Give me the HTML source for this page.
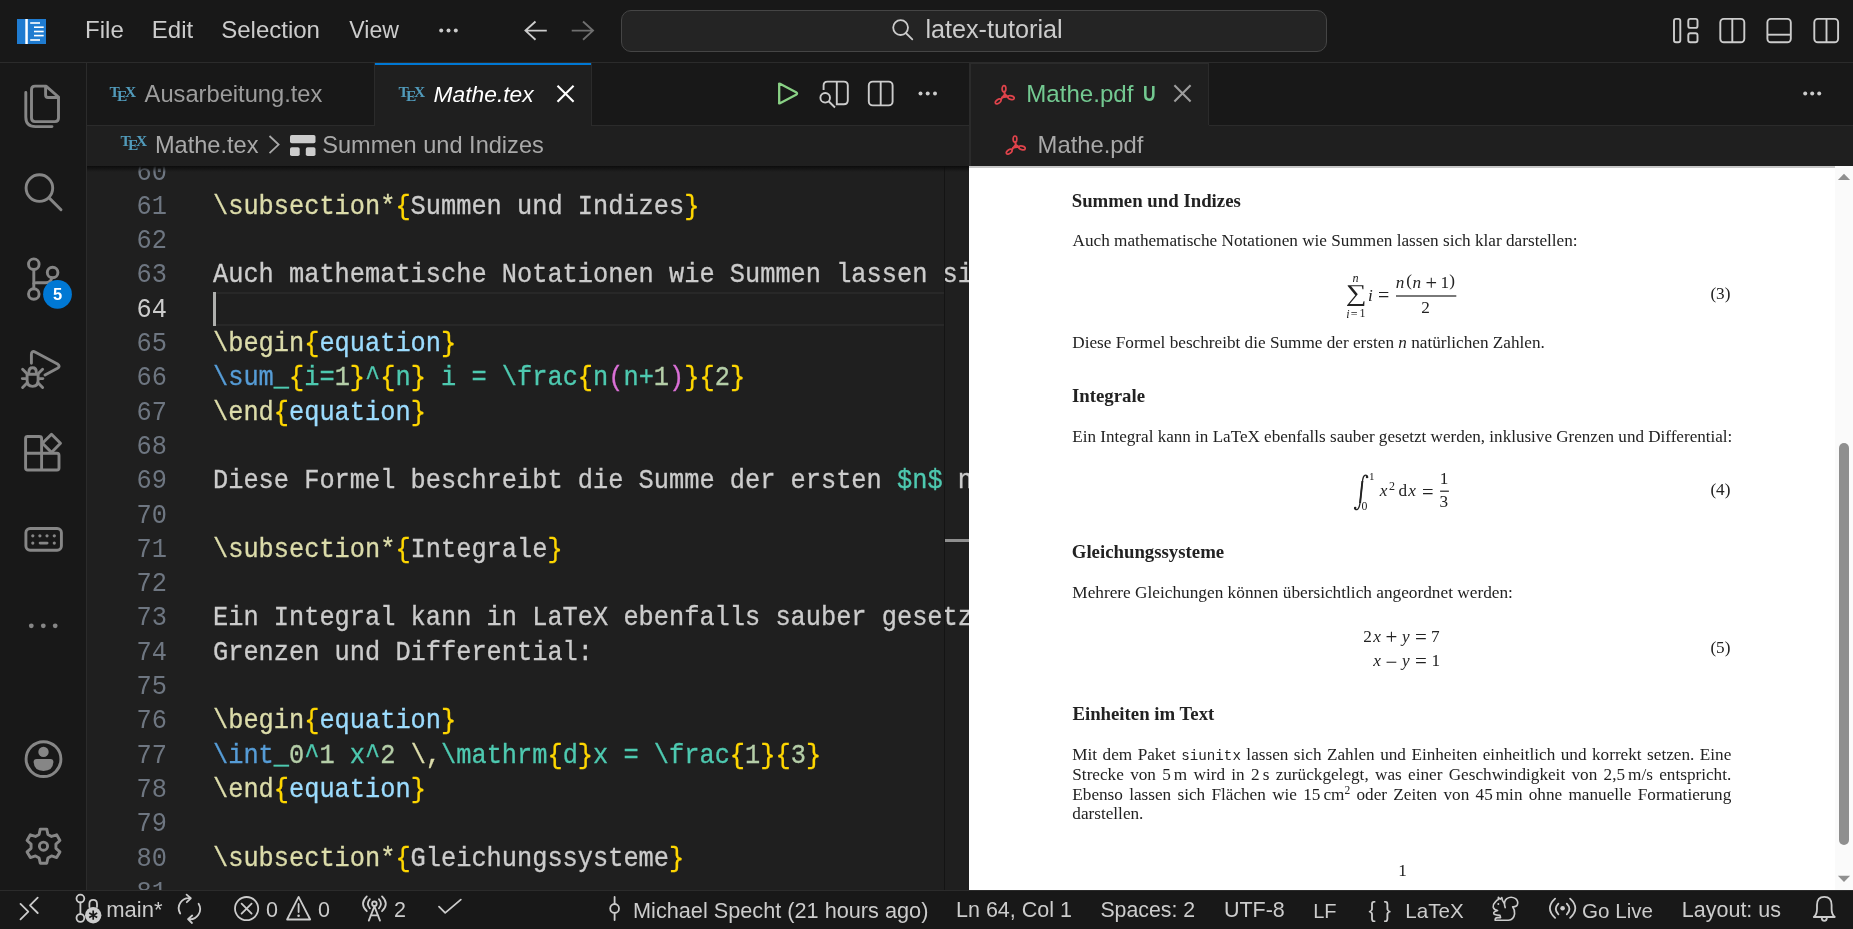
<!DOCTYPE html>
<html><head><meta charset="utf-8"><title>Mathe.tex - latex-tutorial</title>
<style>
*{margin:0;padding:0;box-sizing:border-box}
html,body{width:1853px;height:929px;overflow:hidden;background:#181818}
body{position:relative;font-family:"Liberation Sans",sans-serif;will-change:transform}
.r{position:absolute}
.t{position:absolute;white-space:pre;line-height:1}
.ov{position:absolute;left:0;top:0;pointer-events:none}
#editor{position:absolute;left:87px;top:166px;width:882px;height:724px;overflow:hidden;background:#1f1f1f}
#editor .ln{position:absolute;right:802px;transform:scaleY(1.08);transform-origin:0 19.4px;font-family:"Liberation Mono",monospace;font-size:25.345px;line-height:1;white-space:pre}
#editor .code{-webkit-text-stroke:0.3px currentColor;position:absolute;left:126px;transform:scaleY(1.08);transform-origin:0 19.4px;font-family:"Liberation Mono",monospace;font-size:25.345px;line-height:1;white-space:pre}
#pdf{position:absolute;left:969px;top:166px;width:884px;height:724px;overflow:hidden;background:#ffffff}
#pdfin{position:absolute;left:-969px;top:-166px;width:1853px;height:929px}
.th{display:inline-block;width:3px}
sup{font-size:11.5px;vertical-align:0;position:relative;top:-6px}
</style></head><body>
<div class="r" style="left:0px;top:0px;width:1853px;height:62px;background:#181818;"></div>
<div class="r" style="left:0px;top:62px;width:1853px;height:1px;background:#2b2b2b;"></div>
<div class="r" style="left:621px;top:10px;width:706px;height:42px;background:#242424;border:1px solid #454545;border-radius:10px;"></div>
<div class="r" style="left:0px;top:63px;width:86px;height:827px;background:#181818;"></div>
<div class="r" style="left:86px;top:63px;width:1px;height:827px;background:#2b2b2b;"></div>
<div class="r" style="left:87px;top:63px;width:882px;height:62px;background:#181818;"></div>
<div class="r" style="left:87px;top:125px;width:882px;height:1px;background:#2b2b2b;"></div>
<div class="r" style="left:374px;top:63px;width:1px;height:62px;background:#2b2b2b;"></div>
<div class="r" style="left:375px;top:63px;width:216px;height:63px;background:#1f1f1f;"></div>
<div class="r" style="left:375px;top:63px;width:216px;height:2px;background:#0078d4;"></div>
<div class="r" style="left:591px;top:63px;width:1px;height:62px;background:#2b2b2b;"></div>
<div class="r" style="left:87px;top:126px;width:882px;height:40px;background:#1f1f1f;"></div>
<div class="r" style="left:87px;top:166px;width:882px;height:724px;background:#1f1f1f;"></div>
<div class="r" style="left:969px;top:63px;width:884px;height:62px;background:#181818;"></div>
<div class="r" style="left:969px;top:63px;width:2px;height:103px;background:#2b2b2b;"></div>
<div class="r" style="left:971px;top:63px;width:238px;height:63px;background:#1f1f1f;"></div>
<div class="r" style="left:971px;top:63px;width:238px;height:1px;background:#2b2b2b;"></div>
<div class="r" style="left:1208px;top:63px;width:1px;height:62px;background:#2b2b2b;"></div>
<div class="r" style="left:1209px;top:125px;width:644px;height:1px;background:#2b2b2b;"></div>
<div class="r" style="left:971px;top:126px;width:882px;height:40px;background:#1f1f1f;"></div>
<div class="r" style="left:0px;top:890px;width:1853px;height:39px;background:#181818;"></div>
<div class="r" style="left:0px;top:890px;width:1853px;height:1px;background:#2b2b2b;"></div>
<div id="editor">
<div class="r" style="left:126px;top:126px;width:731px;height:34px;border-top:2px solid #282828;border-bottom:2px solid #282828"></div>
<div class="ln" style="top:-5.42px;color:#6e7681">60</div>
<div class="ln" style="top:28.88px;color:#6e7681">61</div>
<div class="code" style="top:28.88px"><span style="color:#dcdcaa">\subsection*</span><span style="color:#ffd700">{</span><span style="color:#cccccc">Summen und Indizes</span><span style="color:#ffd700">}</span></div>
<div class="ln" style="top:63.18px;color:#6e7681">62</div>
<div class="ln" style="top:97.48px;color:#6e7681">63</div>
<div class="code" style="top:97.48px"><span style="color:#cccccc">Auch mathematische Notationen wie Summen lassen si</span></div>
<div class="ln" style="top:131.78px;color:#cccccc">64</div>
<div class="ln" style="top:166.08px;color:#6e7681">65</div>
<div class="code" style="top:166.08px"><span style="color:#dcdcaa">\begin</span><span style="color:#ffd700">{</span><span style="color:#9cdcfe">equation</span><span style="color:#ffd700">}</span></div>
<div class="ln" style="top:200.38px;color:#6e7681">66</div>
<div class="code" style="top:200.38px"><span style="color:#569cd6">\sum</span><span style="color:#4ec9b0">_</span><span style="color:#ffd700">{</span><span style="color:#4ec9b0">i=</span><span style="color:#b5cea8">1</span><span style="color:#ffd700">}</span><span style="color:#4ec9b0">^</span><span style="color:#ffd700">{</span><span style="color:#4ec9b0">n</span><span style="color:#ffd700">}</span><span style="color:#4ec9b0"> i = \frac</span><span style="color:#ffd700">{</span><span style="color:#4ec9b0">n</span><span style="color:#da70d6">(</span><span style="color:#4ec9b0">n+</span><span style="color:#b5cea8">1</span><span style="color:#da70d6">)</span><span style="color:#ffd700">}</span><span style="color:#ffd700">{</span><span style="color:#b5cea8">2</span><span style="color:#ffd700">}</span></div>
<div class="ln" style="top:234.68px;color:#6e7681">67</div>
<div class="code" style="top:234.68px"><span style="color:#dcdcaa">\end</span><span style="color:#ffd700">{</span><span style="color:#9cdcfe">equation</span><span style="color:#ffd700">}</span></div>
<div class="ln" style="top:268.98px;color:#6e7681">68</div>
<div class="ln" style="top:303.28px;color:#6e7681">69</div>
<div class="code" style="top:303.28px"><span style="color:#cccccc">Diese Formel beschreibt die Summe der ersten </span><span style="color:#4ec9b0">$n$</span><span style="color:#cccccc"> n</span></div>
<div class="ln" style="top:337.58px;color:#6e7681">70</div>
<div class="ln" style="top:371.88px;color:#6e7681">71</div>
<div class="code" style="top:371.88px"><span style="color:#dcdcaa">\subsection*</span><span style="color:#ffd700">{</span><span style="color:#cccccc">Integrale</span><span style="color:#ffd700">}</span></div>
<div class="ln" style="top:406.18px;color:#6e7681">72</div>
<div class="ln" style="top:440.48px;color:#6e7681">73</div>
<div class="code" style="top:440.48px"><span style="color:#cccccc">Ein Integral kann in LaTeX ebenfalls sauber gesetz</span></div>
<div class="ln" style="top:474.78px;color:#6e7681">74</div>
<div class="code" style="top:474.78px"><span style="color:#cccccc">Grenzen und Differential:</span></div>
<div class="ln" style="top:509.08px;color:#6e7681">75</div>
<div class="ln" style="top:543.38px;color:#6e7681">76</div>
<div class="code" style="top:543.38px"><span style="color:#dcdcaa">\begin</span><span style="color:#ffd700">{</span><span style="color:#9cdcfe">equation</span><span style="color:#ffd700">}</span></div>
<div class="ln" style="top:577.68px;color:#6e7681">77</div>
<div class="code" style="top:577.68px"><span style="color:#569cd6">\int</span><span style="color:#4ec9b0">_</span><span style="color:#b5cea8">0</span><span style="color:#4ec9b0">^</span><span style="color:#b5cea8">1</span><span style="color:#4ec9b0"> x^</span><span style="color:#b5cea8">2</span><span style="color:#cccccc"> </span><span style="color:#dcdcaa">\,</span><span style="color:#4ec9b0">\mathrm</span><span style="color:#ffd700">{</span><span style="color:#4ec9b0">d</span><span style="color:#ffd700">}</span><span style="color:#4ec9b0">x = \frac</span><span style="color:#ffd700">{</span><span style="color:#b5cea8">1</span><span style="color:#ffd700">}</span><span style="color:#ffd700">{</span><span style="color:#b5cea8">3</span><span style="color:#ffd700">}</span></div>
<div class="ln" style="top:611.98px;color:#6e7681">78</div>
<div class="code" style="top:611.98px"><span style="color:#dcdcaa">\end</span><span style="color:#ffd700">{</span><span style="color:#9cdcfe">equation</span><span style="color:#ffd700">}</span></div>
<div class="ln" style="top:646.28px;color:#6e7681">79</div>
<div class="ln" style="top:680.58px;color:#6e7681">80</div>
<div class="code" style="top:680.58px"><span style="color:#dcdcaa">\subsection*</span><span style="color:#ffd700">{</span><span style="color:#cccccc">Gleichungssysteme</span><span style="color:#ffd700">}</span></div>
<div class="ln" style="top:714.88px;color:#6e7681">81</div>
<div class="r" style="left:126px;top:126px;width:3px;height:34px;background:#aeafad"></div>
<div class="r" style="left:857px;top:0;width:1px;height:724px;background:#141414"></div>
<div class="r" style="left:858px;top:373px;width:24px;height:3px;background:#8f8f8f"></div>
<div class="r" style="left:0;top:0;width:882px;height:6px;background:linear-gradient(#0c0c0c,rgba(0,0,0,0))"></div>
</div>
<div id="pdf"><div id="pdfin">
<div class="t" style="left:1071.70px;top:191.76px;font-size:18.8px;font-family:'Liberation Serif', serif;color:#222222;font-weight:bold;">Summen und Indizes</div>
<div class="t" style="left:1072.60px;top:232.30px;font-size:17.2px;font-family:'Liberation Serif', serif;color:#222222;">Auch mathematische Notationen wie Summen lassen sich klar darstellen:</div>
<div class="t" style="left:1072.30px;top:334.40px;font-size:17.2px;font-family:'Liberation Serif', serif;color:#222222;">Diese Formel beschreibt die Summe der ersten <i>n</i> natürlichen Zahlen.</div>
<div class="t" style="left:1072.00px;top:387.26px;font-size:18.8px;font-family:'Liberation Serif', serif;color:#222222;font-weight:bold;">Integrale</div>
<div class="t" style="left:1072.30px;top:428.20px;font-size:17.08px;font-family:'Liberation Serif', serif;color:#222222;">Ein Integral kann in LaTeX ebenfalls sauber gesetzt werden, inklusive Grenzen und Differential:</div>
<div class="t" style="left:1071.80px;top:543.26px;font-size:18.8px;font-family:'Liberation Serif', serif;color:#222222;font-weight:bold;">Gleichungssysteme</div>
<div class="t" style="left:1072.30px;top:583.73px;font-size:17.28px;font-family:'Liberation Serif', serif;color:#222222;">Mehrere Gleichungen können übersichtlich angeordnet werden:</div>
<div class="t" style="left:1072.40px;top:705.06px;font-size:18.8px;font-family:'Liberation Serif', serif;color:#222222;font-weight:bold;">Einheiten im Text</div>
<div class="t" style="left:1072.30px;top:745.90px;font-size:17.2px;font-family:'Liberation Serif', serif;color:#222222;width:659px;white-space:normal;text-align:justify;text-align-last:justify;">Mit dem Paket <span style="font-family:'Liberation Mono';font-size:14.2px">siunitx</span> lassen sich Zahlen und Einheiten einheitlich und korrekt setzen. Eine</div>
<div class="t" style="left:1072.30px;top:766.10px;font-size:17.2px;font-family:'Liberation Serif', serif;color:#222222;width:659px;white-space:normal;text-align:justify;text-align-last:justify;">Strecke von 5<span class="th"></span>m wird in 2<span class="th"></span>s zurückgelegt, was einer Geschwindigkeit von 2,5<span class="th"></span>m/s entspricht.</div>
<div class="t" style="left:1072.30px;top:785.90px;font-size:17.2px;font-family:'Liberation Serif', serif;color:#222222;width:659px;white-space:normal;text-align:justify;text-align-last:justify;">Ebenso lassen sich Flächen wie 15<span class="th"></span>cm<sup>2</sup> oder Zeiten von 45<span class="th"></span>min ohne manuelle Formatierung</div>
<div class="t" style="left:1072.30px;top:805.20px;font-size:17.2px;font-family:'Liberation Serif', serif;color:#222222;width:659px;white-space:normal;">darstellen.</div>
<div class="t" style="left:1710.40px;top:285.40px;font-size:17.2px;font-family:'Liberation Serif', serif;color:#222222;">(3)</div>
<div class="t" style="left:1710.40px;top:481.20px;font-size:17.2px;font-family:'Liberation Serif', serif;color:#222222;">(4)</div>
<div class="t" style="left:1710.40px;top:639.20px;font-size:17.2px;font-family:'Liberation Serif', serif;color:#222222;">(5)</div>
<div class="t" style="left:1398.20px;top:861.50px;font-size:17.2px;font-family:'Liberation Serif', serif;color:#222222;">1</div><svg class="ov" width="1853" height="929" style="font-family:'Liberation Serif'" fill="#222222"><text x="1352.50" y="282.40" font-style="italic" font-size="12.2">n</text><text x="1346.25" y="317.60" font-style="italic" font-size="12">i</text><text x="1350.67" y="318.30" font-style="normal" font-size="12">=</text><text x="1359.40" y="317.40" font-style="normal" font-size="12">1</text><text x="1367.90" y="300.73" font-style="italic" font-size="17.2">i</text><text x="1378.00" y="302.32" font-style="normal" font-size="20">=</text><text x="1395.78" y="287.70" font-style="italic" font-size="17.2">n</text><text x="1406.15" y="286.07" font-style="normal" font-size="17.2">(</text><text x="1412.38" y="287.70" font-style="italic" font-size="17.2">n</text><text x="1425.40" y="289.60" font-style="normal" font-size="20.5">+</text><text x="1440.60" y="287.70" font-style="normal" font-size="17.2">1</text><text x="1449.30" y="286.07" font-style="normal" font-size="17.2">)</text><text x="1421.15" y="312.80" font-style="normal" font-size="17.2">2</text><text x="1368.90" y="479.68" font-style="normal" font-size="11">1</text><text x="1361.50" y="510.07" font-style="normal" font-size="11.8">0</text><text x="1379.65" y="496.40" font-style="italic" font-size="17.2">x</text><text x="1389.00" y="490.00" font-style="normal" font-size="12">2</text><text x="1398.58" y="496.27" font-style="normal" font-size="17.2">d</text><text x="1408.35" y="496.40" font-style="italic" font-size="17.2">x</text><text x="1422.10" y="498.65" font-style="normal" font-size="20.5">=</text><text x="1439.80" y="483.50" font-style="normal" font-size="17.2">1</text><text x="1439.62" y="507.27" font-style="normal" font-size="17.2">3</text><text x="1363.25" y="642.30" font-style="normal" font-size="17.2">2</text><text x="1373.25" y="642.30" font-style="italic" font-size="17.2">x</text><text x="1385.50" y="644.42" font-style="normal" font-size="21">+</text><text x="1401.88" y="642.30" font-style="italic" font-size="17.2">y</text><text x="1415.00" y="644.17" font-style="normal" font-size="21">=</text><text x="1430.88" y="642.30" font-style="normal" font-size="17.2">7</text><text x="1373.25" y="666.10" font-style="italic" font-size="17.2">x</text><text x="1385.50" y="668.70" font-style="normal" font-size="21">−</text><text x="1401.88" y="666.10" font-style="italic" font-size="17.2">y</text><text x="1415.00" y="668.38" font-style="normal" font-size="21">=</text><text x="1431.50" y="666.10" font-style="normal" font-size="17.2">1</text><text transform="translate(1345.63,301.18) scale(1.221,1)" font-size="23.9">∑</text><path d="M1367.6 477.2 C1367.4 474.6 1364.6 474.2 1363.4 477 C1362.7 478.6 1362.4 481 1362.1 484 L1360.2 501.5 C1359.8 505.5 1359.2 508 1357.6 509.2 C1356.4 510 1354.9 509.7 1354.6 508.2" fill="none" stroke="#222222" stroke-width="1.35" stroke-linecap="round"/><path d="M1362.4 481 L1360.1 503" stroke="#222222" stroke-width="1.9"/><circle cx="1367" cy="476.9" r="1.25" fill="#222222"/><circle cx="1355.2" cy="508" r="1.25" fill="#222222"/><rect x="1396" y="295.4" width="60.3" height="1.2" fill="#222222"/><rect x="1440.1" y="490.6" width="8.8" height="1.2" fill="#222222"/></svg>
</div>
<div class="r" style="left:0;top:0;width:884px;height:2px;background:#c8c8c8"></div>
<div class="r" style="left:866px;top:0;width:18px;height:724px;background:#fafafa"></div>
<div class="r" style="left:869.8px;top:277px;width:10px;height:402px;border-radius:5px;background:#8f8f8f"></div>
</div>
<div class="t" style="left:85.10px;top:17.68px;font-size:24px;font-family:'Liberation Sans', sans-serif;color:#cccccc;">File</div>
<div class="t" style="left:151.80px;top:17.68px;font-size:24px;font-family:'Liberation Sans', sans-serif;color:#cccccc;">Edit</div>
<div class="t" style="left:221.20px;top:17.68px;font-size:24px;font-family:'Liberation Sans', sans-serif;color:#cccccc;">Selection</div>
<div class="t" style="left:349.30px;top:19.04px;font-size:23.1px;font-family:'Liberation Sans', sans-serif;color:#cccccc;">View</div>
<div class="t" style="left:925.40px;top:16.66px;font-size:25.2px;font-family:'Liberation Sans', sans-serif;color:#cccccc;">latex-tutorial</div>
<div class="t" style="left:144.60px;top:82.93px;font-size:23.7px;font-family:'Liberation Sans', sans-serif;color:#9d9d9d;">Ausarbeitung.tex</div>
<div class="t" style="left:433.60px;top:82.60px;font-size:22.8px;font-family:'Liberation Sans', sans-serif;color:#ffffff;font-style:italic;">Mathe.tex</div>
<div class="t" style="left:1026.30px;top:82.49px;font-size:24.1px;font-family:'Liberation Sans', sans-serif;color:#73c991;">Mathe.pdf</div>
<div class="t" style="left:1142.80px;top:83.13px;font-size:22.4px;font-family:'Liberation Sans', sans-serif;color:#73c991;font-weight:bold;transform:scaleX(0.78);transform-origin:0 0;">U</div>
<div class="t" style="left:154.90px;top:133.52px;font-size:23.6px;font-family:'Liberation Sans', sans-serif;color:#a9a9a9;">Mathe.tex</div>
<div class="t" style="left:322.20px;top:133.52px;font-size:23.6px;font-family:'Liberation Sans', sans-serif;color:#a9a9a9;">Summen und Indizes</div>
<div class="t" style="left:1037.60px;top:133.35px;font-size:23.8px;font-family:'Liberation Sans', sans-serif;color:#a9a9a9;">Mathe.pdf</div>
<div class="t" style="left:106.30px;top:899.37px;font-size:22px;font-family:'Liberation Sans', sans-serif;color:#cccccc;">main*</div>
<div class="t" style="left:266.00px;top:899.90px;font-size:21.5px;font-family:'Liberation Sans', sans-serif;color:#cccccc;">0</div>
<div class="t" style="left:318.00px;top:899.90px;font-size:21.5px;font-family:'Liberation Sans', sans-serif;color:#cccccc;">0</div>
<div class="t" style="left:394.10px;top:899.90px;font-size:21.5px;font-family:'Liberation Sans', sans-serif;color:#cccccc;">2</div>
<div class="t" style="left:633.00px;top:899.73px;font-size:21.7px;font-family:'Liberation Sans', sans-serif;color:#cccccc;">Michael Specht (21 hours ago)</div>
<div class="t" style="left:956.00px;top:899.90px;font-size:21.5px;font-family:'Liberation Sans', sans-serif;color:#cccccc;">Ln 64, Col 1</div>
<div class="t" style="left:1100.40px;top:900.07px;font-size:21.3px;font-family:'Liberation Sans', sans-serif;color:#cccccc;">Spaces: 2</div>
<div class="t" style="left:1223.90px;top:899.90px;font-size:21.5px;font-family:'Liberation Sans', sans-serif;color:#cccccc;">UTF-8</div>
<div class="t" style="left:1313.20px;top:901.17px;font-size:20px;font-family:'Liberation Sans', sans-serif;color:#cccccc;">LF</div>
<div class="t" style="left:1368.50px;top:899.90px;font-size:21.5px;font-family:'Liberation Sans', sans-serif;color:#cccccc;letter-spacing:1px;">{ }</div>
<div class="t" style="left:1405.30px;top:900.66px;font-size:20.6px;font-family:'Liberation Sans', sans-serif;color:#cccccc;">LaTeX</div>
<div class="t" style="left:1582.00px;top:900.66px;font-size:20.6px;font-family:'Liberation Sans', sans-serif;color:#cccccc;">Go Live</div>
<div class="t" style="left:1681.80px;top:899.90px;font-size:21.5px;font-family:'Liberation Sans', sans-serif;color:#cccccc;">Layout: us</div>
<svg class="ov" width="1853" height="929" viewBox="0 0 1853 929"><rect x="17" y="19" width="29" height="25" fill="#1f7bd0"/><rect x="25.3" y="19" width="2.5" height="25" fill="#ffffff"/><rect x="30.2" y="22.2" width="9.8" height="1.6" fill="#ffffff"/><rect x="34" y="26.4" width="9.700000000000003" height="1.6" fill="#ffffff"/><rect x="34" y="30.7" width="9.700000000000003" height="1.6" fill="#ffffff"/><rect x="34" y="34.800000000000004" width="9.700000000000003" height="1.6" fill="#ffffff"/><rect x="30.2" y="39.2" width="9.8" height="1.6" fill="#ffffff"/><circle cx="441.2" cy="30.6" r="2" fill="#cccccc"/><circle cx="448.5" cy="30.6" r="2" fill="#cccccc"/><circle cx="455.8" cy="30.6" r="2" fill="#cccccc"/><path d="M546.8 30.6 H526 M535.5 21.5 L525.5 30.6 L535.5 39.7" fill="none" stroke="#cccccc" stroke-width="1.9"/><path d="M571.7 30.6 H592.5 M583 21.5 L593 30.6 L583 39.7" fill="none" stroke="#6f6f6f" stroke-width="1.9"/><circle cx="900.6" cy="27.6" r="7.4" fill="none" stroke="#cccccc" stroke-width="1.8"/><path d="M905.8 33 L912.3 39.4" stroke="#cccccc" stroke-width="1.8" stroke-linecap="round"/><g fill="none" stroke="#cccccc" stroke-width="1.9"><rect x="1674" y="18.9" width="6.3" height="23.4" rx="2"/><rect x="1688.3" y="18.9" width="9.2" height="9" rx="2"/><rect x="1688.3" y="33.3" width="9.2" height="9" rx="2"/><rect x="1720.3" y="18.9" width="24" height="23.4" rx="3.5"/><path d="M1732.3 19 V42.3"/><rect x="1767.4" y="18.9" width="23.4" height="23.4" rx="3.5"/><path d="M1767.4 34.7 H1790.8"/><rect x="1814.3" y="18.9" width="23.8" height="23.4" rx="3.5"/><path d="M1826.5 19 V42.3"/></g><g fill="none" stroke="#868686" stroke-width="2.9" stroke-linecap="round" stroke-linejoin="round"><path d="M46 86.1 H35 Q31.5 86.1 31.5 89.6 V118 Q31.5 121.6 35 121.6 H55 Q58.5 121.6 58.5 118 V97 L46 86.1 Z"/><path d="M45.6 86.4 V95 Q45.6 97.5 48 97.5 H58.2"/><path d="M25.8 92.5 V117 Q25.8 126.6 35.5 126.6 H52"/><circle cx="39.4" cy="188.1" r="13.3"/><path d="M49.6 198.4 L61 209.7"/><circle cx="33.8" cy="264.2" r="5.3"/><circle cx="33.8" cy="294" r="5.3"/><circle cx="52.6" cy="272.5" r="5.3"/><path d="M33.8 269.5 V288.7"/><path d="M33.8 283.6 Q34.3 282.8 37 282.8 H46 Q50.8 282.8 51.8 277.8"/><path d="M31.4 363.2 V354.5 Q31.4 350 35.5 352.2 L57.5 364 Q60.8 366.3 57.5 368.2 L45 375"/><path d="M27.1 374.3 V380.3 Q27.1 386.4 32.6 386.4 Q38.1 386.4 38.1 380.3 V374.3 Z"/><path d="M28.9 372.3 Q28.9 367.8 32.6 367.8 Q36.3 367.8 36.3 372.3"/><path d="M22.6 369.3 L26.6 373.3 M42.6 369.3 L38.6 373.3 M22.3 378.6 H26.5 M42.9 378.6 H38.7 M22.6 387.5 L26.8 383.3 M42.6 387.5 L38.4 383.3"/><path d="M25.6 453 V438.5 Q25.6 436.5 27.6 436.5 H39.2 Q41.6 436.5 41.6 438.5 V469.5 M25.6 453 V468 Q25.6 470 27.6 470 H57 Q59 470 59 468 V455.4 Q59 453.3 57 453.3 H25.6"/><path d="M51.5 434.2 L60.5 443.3 L51.5 452.4 L42.4 443.3 Z"/></g><rect x="25.9" y="528.5" width="35.5" height="21.8" rx="4.2" fill="none" stroke="#868686" stroke-width="2.9"/><circle cx="32.8" cy="535.8" r="1.6" fill="#868686"/><circle cx="39.9" cy="535.8" r="1.6" fill="#868686"/><circle cx="47" cy="535.8" r="1.6" fill="#868686"/><circle cx="54.3" cy="535.8" r="1.6" fill="#868686"/><circle cx="32.8" cy="543.1" r="1.6" fill="#868686"/><circle cx="54.3" cy="543.1" r="1.6" fill="#868686"/><path d="M40 543.1 H47.2" stroke="#868686" stroke-width="2.6" stroke-linecap="round"/><circle cx="31.3" cy="625.8" r="2.4" fill="#868686"/><circle cx="43.3" cy="625.8" r="2.4" fill="#868686"/><circle cx="55.2" cy="625.8" r="2.4" fill="#868686"/><circle cx="43.5" cy="759.1" r="17.4" fill="none" stroke="#868686" stroke-width="2.9"/><circle cx="43.5" cy="751.9" r="5.2" fill="#868686"/><path d="M36.6 758.9 H50.5 Q53.4 758.9 53.4 761.8 Q53 770.9 43.5 770.9 Q34 770.9 33.6 761.8 Q33.6 758.9 36.6 758.9 Z" fill="#868686"/><path d="M39.11 834.39 L40.24 829.11 L46.76 829.11 L47.89 834.39 L51.53 836.49 L56.67 834.83 L59.93 840.48 L55.92 844.10 L55.92 848.30 L59.93 851.92 L56.67 857.57 L51.53 855.91 L47.89 858.01 L46.76 863.29 L40.24 863.29 L39.11 858.01 L35.47 855.91 L30.33 857.57 L27.07 851.92 L31.08 848.30 L31.08 844.10 L27.07 840.48 L30.33 834.83 L35.47 836.49 Z" fill="none" stroke="#868686" stroke-width="2.9" stroke-linejoin="round"/><circle cx="43.5" cy="846.2" r="4.1" fill="none" stroke="#868686" stroke-width="2.9"/><circle cx="57.5" cy="294.3" r="14.4" fill="#0078d4"/><text x="57.5" y="300.2" text-anchor="middle" font-family="Liberation Sans" font-weight="bold" font-size="16.5" fill="#ffffff">5</text><g fill="#519aba" font-family="Liberation Serif" font-weight="bold" font-size="15.5"><text x="109.5" y="97.4">T</text><text x="116.89999999999999" y="101.3">E</text><text x="125.0" y="97.4">X</text></g><g fill="#519aba" font-family="Liberation Serif" font-weight="bold" font-size="15.5"><text x="398.5" y="97.4">T</text><text x="405.90000000000003" y="101.3">E</text><text x="414.0" y="97.4">X</text></g><g fill="#519aba" font-family="Liberation Serif" font-weight="bold" font-size="15.5"><text x="120.5" y="145.9">T</text><text x="127.89999999999999" y="149.8">E</text><text x="136.0" y="145.9">X</text></g><path d="M557.5 85.8 L573.6 101.8 M573.6 85.8 L557.5 101.8" stroke="#ffffff" stroke-width="2.1"/><path d="M1174.4 85.3 L1190.6 101.4 M1190.6 85.3 L1174.4 101.4" stroke="#9d9d9d" stroke-width="2.1"/><g transform="translate(995,85.2)" fill="none" stroke="#df434b" stroke-linecap="round" stroke-linejoin="round"><ellipse cx="9" cy="3.6" rx="1.9" ry="3.1" stroke-width="1.7"/><ellipse cx="16" cy="12.4" rx="3.3" ry="1.8" transform="rotate(14 16 12.4)" stroke-width="1.7"/><ellipse cx="3.2" cy="16.2" rx="3.3" ry="1.8" transform="rotate(-38 3.2 16.2)" stroke-width="1.7"/><path d="M9.3 6.5 L9.8 9.2 L6.3 13.7 M9.8 9.2 L12.8 11.6 M9.8 9.2 Q8.5 11.6 7 12.3 Q10 11.2 12.8 11.6" stroke-width="2"/></g><g transform="translate(1006,135.5)" fill="none" stroke="#df434b" stroke-linecap="round" stroke-linejoin="round"><ellipse cx="9" cy="3.6" rx="1.9" ry="3.1" stroke-width="1.7"/><ellipse cx="16" cy="12.4" rx="3.3" ry="1.8" transform="rotate(14 16 12.4)" stroke-width="1.7"/><ellipse cx="3.2" cy="16.2" rx="3.3" ry="1.8" transform="rotate(-38 3.2 16.2)" stroke-width="1.7"/><path d="M9.3 6.5 L9.8 9.2 L6.3 13.7 M9.8 9.2 L12.8 11.6 M9.8 9.2 Q8.5 11.6 7 12.3 Q10 11.2 12.8 11.6" stroke-width="2"/></g><path d="M779.2 84.5 Q778.6 83.2 780 83.8 L796.5 92.6 Q797.6 93.5 796.5 94.4 L780 103.2 Q778.6 103.8 779.2 102.5 Z" fill="none" stroke="#89d185" stroke-width="2.3" stroke-linejoin="round"/><g fill="none" stroke="#cccccc" stroke-width="1.9"><path d="M823.6 90 V85.5 Q823.6 81.6 827.5 81.6 H843.8 Q847.8 81.6 847.8 85.5 V100.2 Q847.8 104.2 843.8 104.2 H836.8 V81.6"/><circle cx="825.2" cy="97.8" r="4.8"/><path d="M828.6 101.3 L835 107.5"/></g><g fill="none" stroke="#cccccc" stroke-width="1.9"><rect x="868.8" y="81.6" width="23.8" height="23.8" rx="4"/><path d="M880.7 81.6 V105.4"/></g><circle cx="920.5" cy="93.5" r="2" fill="#cccccc"/><circle cx="927.7" cy="93.5" r="2" fill="#cccccc"/><circle cx="935" cy="93.5" r="2" fill="#cccccc"/><circle cx="1805.2" cy="93.4" r="2" fill="#cccccc"/><circle cx="1812.2" cy="93.4" r="2" fill="#cccccc"/><circle cx="1819.2" cy="93.4" r="2" fill="#cccccc"/><path d="M269.5 136 L278.6 144.6 L269.5 153.2" fill="none" stroke="#a9a9a9" stroke-width="1.8"/><rect x="290" y="135" width="25.5" height="8.3" rx="1.8" fill="#cccccc"/><rect x="290" y="147.3" width="9.7" height="8.7" rx="1.8" fill="#cccccc"/><rect x="305.8" y="147.3" width="9.7" height="8.7" rx="1.8" fill="#cccccc"/><g fill="none" stroke="#cccccc" stroke-width="1.8" stroke-linecap="round" stroke-linejoin="round"><path d="M20.5 919.3 L28.3 911.6 L20.5 903.9 M37.7 897.6 L30 905.3 L37.7 913"/><circle cx="80.4" cy="898.6" r="3.9"/><circle cx="80.4" cy="918" r="3.9"/><path d="M80.4 902.5 V914.1"/><path d="M89.4 907 V903.8 Q89.4 899.9 93.2 899.9 Q97 899.9 97 903.8 V907"/><path d="M180.2 913.5 A10.2 10.2 0 0 1 190.5 898.2 M186.6 894.6 L190.8 898.3 L186.8 902.2 M198.6 903.8 A10.2 10.2 0 0 1 188.2 919.2 M192.2 915.5 L188 919.2 L192 923"/><circle cx="246.6" cy="908.6" r="11.6"/><path d="M241.6 903.6 L251.6 913.6 M251.6 903.6 L241.6 913.6"/><path d="M298.6 896.9 L310.2 919.5 H287.1 Z"/><path d="M298.6 904 V912"/><circle cx="374.4" cy="903.8" r="2.3"/><path d="M374.4 906.3 L368.8 920.6 M374.4 906.3 L380 920.6 M370.6 915.4 H378.2 M366.8 896.4 Q359.2 903.8 366.8 911.2 M369.9 899.2 Q365.9 903.8 369.9 908.4 M382 896.4 Q389.6 903.8 382 911.2 M378.9 899.2 Q382.9 903.8 378.9 908.4"/><path d="M439 906.7 L445.2 912.9 L460.8 899.6"/><circle cx="614.6" cy="908.4" r="4.4"/><path d="M614.6 897 V904 M614.6 912.8 V920"/><path d="M1813.8 917 Q1817 914.6 1817 909 V905 Q1817 896.8 1824.3 896.8 Q1831.6 896.8 1831.6 905 V909 Q1831.6 914.6 1834.8 917 Z M1821.7 917.5 Q1821.7 920.8 1824.3 920.8 Q1826.9 920.8 1826.9 917.5"/><path d="M1555.1 898.6 Q1544.7 908.2 1555.1 917.8 M1558.4 903.7 Q1553.2 909 1558.4 914.3 M1570.1 898.6 Q1580.5 908.2 1570.1 917.8 M1566.8 903.7 Q1572 909 1566.8 914.3"/></g><circle cx="93.2" cy="915.2" r="8.2" fill="#cccccc"/><path d="M93.2 910.6 V919.8 M89.2 912.9 L97.2 917.5 M97.2 912.9 L89.2 917.5" stroke="#181818" stroke-width="1.7"/><circle cx="298.6" cy="915.8" r="1.3" fill="#cccccc"/><circle cx="1562.6" cy="908.2" r="2.3" fill="#cccccc"/><g fill="none" stroke="#cccccc" stroke-width="1.6" stroke-linecap="round" stroke-linejoin="round"><path d="M1505.2 907.6 Q1503.2 901.5 1506.8 898.6 Q1511 895.8 1515.6 898.6 Q1518.6 901.2 1517.4 904.6 Q1516.2 907.2 1512.6 906.8 Q1515 910 1514.6 913.8 Q1513.8 919.6 1508.4 920.3 H1495.2 Q1494.6 917.8 1497.8 917.6 H1500.6 L1500 915.4 Q1496.2 915.2 1494.2 914.2 Q1493 912.6 1494.8 911.6 L1497.6 910.6 Q1494 909.8 1493.2 907.2 Q1492.8 904.4 1495.2 902.2 Q1496.8 900.2 1498.2 899.6 L1498.4 897.4 L1500.2 899.2 L1501.8 897.6 L1502.4 900.2 Q1504.6 902.8 1505.2 907.6"/></g><circle cx="1498.3" cy="904" r="1" fill="#cccccc"/></svg>
<svg class="ov" width="1853" height="929"><path d="M1837.9 179.9 L1844 173.8 L1850.1 179.9 Z" fill="#8f8f8f"/><path d="M1837.9 875.8 L1844 882.1 L1850.1 875.8 Z" fill="#8f8f8f"/></svg>
</body></html>
